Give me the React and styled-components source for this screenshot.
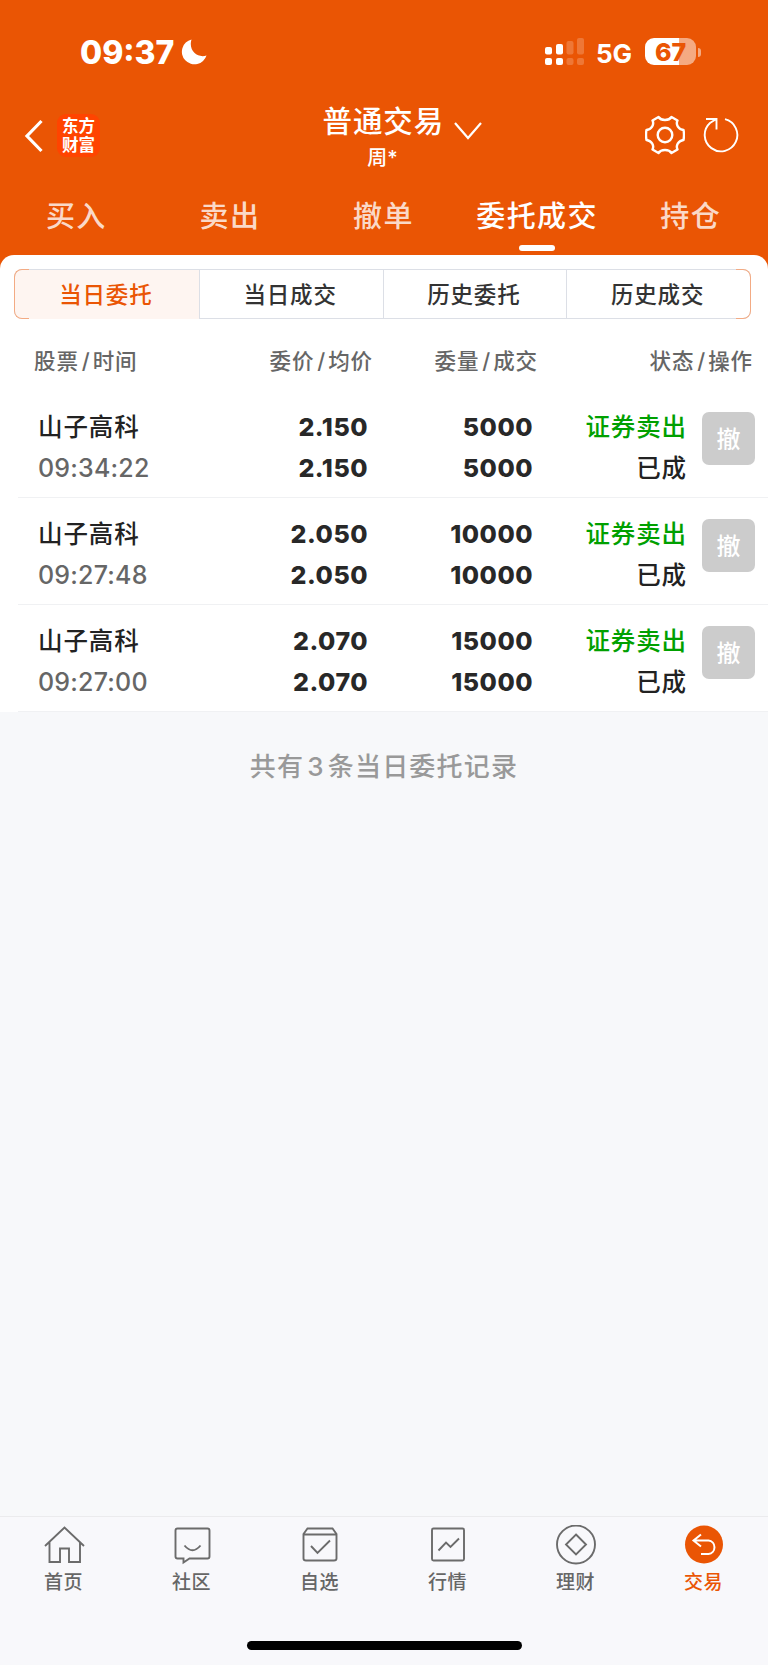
import React from 'react'
import styled, { createGlobalStyle } from 'styled-components'

const laranja = '#ea5504'
const fonte = 'Inter, "Noto Sans CJK SC", sans-serif'

const ABAS = ['买入', '卖出', '撤单', '委托成交', '持仓']
const FILTROS = ['当日委托', '当日成交', '历史委托', '历史成交']
const COLUNAS = [['股票', '时间'], ['委价', '均价'], ['委量', '成交'], ['状态', '操作']]

const ORDENS = [
    { nome: '山子高科', hora: '09:34:22', preco: '2.150', quantidade: '5000' },
    { nome: '山子高科', hora: '09:27:48', preco: '2.050', quantidade: '10000' },
    { nome: '山子高科', hora: '09:27:00', preco: '2.070', quantidade: '15000' },
]

const MENU = [
    {
        nome: '首页',
        icone: <path d="M1 21 20.500 2.500 40 21M5.500 17V37H16V23.500H25V37H36V17" />,
    },
    {
        nome: '社区',
        icone: <>
            <path d="M5.500 3.500H35.500Q37.500 3.500 37.500 5.500V31.500Q37.500 33.500 35.500 33.500H17.500L11.500 37.500V33.500H5.500Q3.500 33.500 3.500 31.500V5.500Q3.500 3.500 5.500 3.500Z" />
            <path d="M12.500 20.500Q20.500 30 28.500 20.500" />
        </>,
    },
    {
        nome: '自选',
        icone: <>
            <path d="M7.500 3.500H32.500L36.500 9V33.500Q36.500 35.500 34 35.500H6Q3.500 35.500 3.500 33.500V9ZM3.500 9.500H36.500" />
            <path d="m11 21 6.500 7L30 15.500" />
        </>,
    },
    {
        nome: '行情',
        icone: <>
            <rect x="4" y="3.500" width="32" height="32" rx="1.500" />
            <path d="m10.500 25.500 7.500-8 4.500 4.500 8.500-8.500" />
        </>,
    },
    {
        nome: '理财',
        icone: <>
            <circle cx="20" cy="19.500" r="19" />
            <path d="M20 9.500 30 19.500 20 29.500 10 19.500Z" />
        </>,
    },
    {
        nome: '交易',
        icone: <>
            <circle cx="20" cy="19.500" r="19" fill={laranja} stroke="none" />
            <path d="M17 9.500 9.500 15.500 17 21.500M9.500 15.500H24.500A6.800 6.800 0 0 1 24.500 29H17" stroke="#fff" strokeWidth="2" />
        </>,
    },
]

export default function App() {
    return (
        <>
        <GlobalStyle />
        <Tela>
            <Topo>
                <Status>
                    <Hora>09:37</Hora>
                    <Lua viewBox="0 0 26 26">
                        <path d="M10.500 .5A12.600 12.600 0 1 0 25.500 16.500C17 19.500 7 12 10.500 .5Z" fill="#fff" />
                    </Lua>
                    <Sinal viewBox="0 0 40 28" fill="#fff">
                        <rect x="0" y="9" width="7" height="7.500" rx="2" />
                        <rect x="0" y="20" width="7" height="7" rx="2" />
                        <rect x="11" y="6" width="7" height="10.500" rx="2" />
                        <rect x="11" y="20" width="7" height="7" rx="2" />
                        <g opacity="0.2">
                            <rect x="21.500" y="3" width="7" height="13.500" rx="2" />
                            <rect x="21.500" y="20" width="7" height="7" rx="2" />
                            <rect x="32" y="0" width="7" height="16.500" rx="2" />
                            <rect x="32" y="20" width="7" height="7" rx="2" />
                        </g>
                    </Sinal>
                    <Rede>5G</Rede>
                    <Bateria>67</Bateria>
                    <Polo />
                </Status>
                <Cabecalho>
                    <Lado>
                        <Voltar viewBox="0 0 20 34">
                            <path d="M17.500 2 3 17 17.500 32" fill="none" stroke="#fff" strokeWidth="3.200" />
                        </Voltar>
                        <Logo>东方财富</Logo>
                    </Lado>
                    <Centro>
                        <Titulo>
                            普通交易
                            <Seta viewBox="0 0 28 18">
                                <path d="m1 1 13 15L27 1" fill="none" stroke="#fff" strokeWidth="2.200" />
                            </Seta>
                        </Titulo>
                        <Conta>周*</Conta>
                    </Centro>
                    <Acoes>
                        <svg width="40" height="40" viewBox="-20 -20 40 40" fill="none" stroke="#fff" strokeWidth="2.400" strokeLinejoin="round">
                            <circle r="7.300" />
                            <path d="M-6.500-18C-4-14 4-14 6.500-18L12.500-14.500C10.500-10.500 13.500-5.500 18.500-5Q19.500 0 18.500 5C13.500 5.500 10.500 10.500 12.500 14.500L6.500 18C4 14-4 14-6.500 18L-12.500 14.500C-10.500 10.500-13.500 5.500-18.500 5Q-19.500 0-18.500-5C-13.500-5.500-10.500-10.500-12.500-14.500Z" />
                        </svg>
                        <svg width="36" height="38" viewBox="-18 -19 36 38" fill="none" stroke="#fff" strokeWidth="1.900">
                            <path d="M4-15.800A16.300 16.300 0 1 1-11-12L-5.500-15.500M-15-16H-4.500V-5.500" />
                        </svg>
                    </Acoes>
                </Cabecalho>
                <Abas>
                    {ABAS.map(aba => <Aba key={aba} $ativa={aba === '委托成交'}>{aba}</Aba>)}
                </Abas>
            </Topo>
            <Painel>
                <Filtros>
                    {FILTROS.map((filtro, i) => <Filtro key={filtro} $ativo={i === 0}>{filtro}</Filtro>)}
                </Filtros>
                <Colunas>
                    {COLUNAS.map(([a, b]) => <Coluna key={a}>{a}<i>/</i>{b}</Coluna>)}
                </Colunas>
                {ORDENS.map(ordem =>
                    <Ordem key={ordem.hora}>
                        <Celula>
                            <Nome>{ordem.nome}</Nome>
                            <Horario>{ordem.hora}</Horario>
                        </Celula>
                        <Celula>
                            <Numero>{ordem.preco}</Numero>
                            <Numero>{ordem.preco}</Numero>
                        </Celula>
                        <Celula>
                            <Numero>{ordem.quantidade}</Numero>
                            <Numero>{ordem.quantidade}</Numero>
                        </Celula>
                        <Celula>
                            <Nome $venda>证券卖出</Nome>
                            <Nome>已成</Nome>
                        </Celula>
                        <Cancelar>撤</Cancelar>
                    </Ordem>)}
            </Painel>
            <Resumo>共有<i>3</i>条当日委托记录</Resumo>
            <Rodape>
                <Menu>
                    {MENU.map(item =>
                        <Item key={item.nome} $ativo={item.nome === '交易'}>
                            <Icone viewBox="0 0 41 40">{item.icone}</Icone>
                            <span>{item.nome}</span>
                        </Item>)}
                </Menu>
                <Barra />
            </Rodape>
        </Tela>
        </>
    )
}

const GlobalStyle = createGlobalStyle`
* {
    box-sizing: border-box;
}
body {
    margin: 0;
    font-family: ${fonte};
}
i {
    font-style: normal;
}
svg {
    display: block;
    flex: none;
}
button {
    font-family: inherit;
    border: 0;
    padding: 0;
}
`

const Tela = styled.div`
width: 768px;
height: 1665px;
display: flex;
flex-direction: column;
background: #f7f8fa;
overflow: hidden;
`

const Topo = styled.header`
height: 269px;
flex: none;
background: ${laranja};
color: #fff;
`

const Status = styled.div`
height: 104px;
padding: 0 67px 0 80px;
display: flex;
align-items: center;
`

const Hora = styled.div`
width: 101px;
padding-top: 2px;
font-size: 32px;
font-weight: 800;
line-height: 40px;
`

const Lua = styled.svg`
width: 26px;
height: 26px;
`

const Sinal = styled.svg`
width: 40px;
height: 28px;
margin-left: auto;
margin-bottom: 1px;
`

const Rede = styled.div`
width: 50px;
margin-left: 11px;
padding-top: 2px;
font-size: 26px;
font-weight: 650;
`

const Bateria = styled.div`
width: 51px;
height: 27px;
margin-left: -1px;
margin-bottom: 1px;
border-radius: 9px;
background: linear-gradient(90deg, #fff 34px, rgba(255, 255, 255, 0.5) 34px);
color: ${laranja};
font-size: 25px;
font-weight: 800;
line-height: 28px;
text-align: center;
`

const Polo = styled.div`
width: 3px;
height: 9px;
margin-left: 2px;
border-radius: 0 4px 4px 0;
background: rgba(255, 255, 255, 0.5);
`

const Cabecalho = styled.div`
height: 80px;
padding: 0 29px 0 24px;
display: grid;
grid-template-columns: 1fr auto 1fr;
`

const Lado = styled.div`
height: 63px;
display: flex;
align-items: center;
`

const Voltar = styled.svg`
width: 20px;
height: 34px;
`

const Logo = styled.div`
width: 43px;
height: 43px;
margin-left: 13px;
padding: 2px 5px 0;
border-radius: 9px;
background: #ff4400;
font-family: "Noto Sans CJK SC", sans-serif;
font-size: 16.500px;
font-weight: 700;
line-height: 19px;
word-break: break-all;
`

const Centro = styled.div`
width: 120px;
padding-top: 1px;
margin-left: 1px;
margin-right: -1px;
display: flex;
flex-direction: column;
align-items: center;
`

const Titulo = styled.div`
width: 120px;
height: 33px;
display: flex;
align-items: center;
font-size: 29.500px;
font-weight: 500;
line-height: 33px;
letter-spacing: 0.900px;
white-space: nowrap;
`

const Seta = styled.svg`
width: 28px;
height: 18px;
margin: 19px 0 0 10px;
`

const Conta = styled.div`
margin-top: 7px;
font-size: 20px;
font-weight: 500;
line-height: 26px;
`

const Acoes = styled.div`
height: 62px;
display: flex;
align-items: center;
justify-content: flex-end;
gap: 18px;
`

const Abas = styled.nav`
height: 71px;
display: grid;
grid-template-columns: repeat(5, 1fr);
`

const Aba = styled.div`
display: flex;
flex-direction: column;
align-items: center;
padding: 14px 1px 0 0;
font-size: 29px;
font-weight: 500;
line-height: 38px;
letter-spacing: 1.400px;
color: ${props => props.$ativa ? '#fff' : 'rgba(255, 255, 255, 0.8)'};

&::after {
    content: '';
    width: 36px;
    height: 6px;
    margin-top: 9px;
    border-radius: 3px;
    background: ${props => props.$ativa ? '#fff' : 'transparent'};
}
`

const Painel = styled.main`
height: 457px;
flex: none;
margin-top: -14px;
padding-top: 14px;
border-radius: 14px 14px 0 0;
background: #fff;
`

const Filtros = styled.div`
position: relative;
height: 50px;
margin: 0 17px 0 14px;
display: grid;
grid-template-columns: repeat(4, 1fr);
border: 1px solid #dcdfe6;
border-radius: 8px;

/* cantos alaranjados por cima da borda */
&::before,
&::after {
    content: '';
    position: absolute;
    top: -1px;
    bottom: -1px;
    width: 14px;
    border: 1px solid #f3ab84;
}

&::before {
    left: -1px;
    border-right: none;
    border-radius: 8px 0 0 8px;
}

&::after {
    right: -1px;
    border-left: none;
    border-radius: 0 8px 8px 0;
}
`

const Filtro = styled.div`
padding-right: 2px;
border-left: ${props => props.$ativo ? 'none' : '1px solid #dcdfe6'};
border-radius: ${props => props.$ativo ? '7px 0 0 7px' : '0'};
background: ${props => props.$ativo ? '#fef5f1' : 'transparent'};
color: ${props => props.$ativo ? laranja : '#333'};
font-size: 22.500px;
font-weight: 500;
line-height: 49px;
letter-spacing: 0.800px;
text-align: center;
`

const Colunas = styled.div`
height: 72px;
padding: 0 15px 0 34px;
display: grid;
grid-template-columns: 139px 200px 165px 1fr;
`

const Coluna = styled.div`
color: #666;
font-size: 21.500px;
font-weight: 500;
line-height: 84px;
letter-spacing: 0.900px;
text-align: right;
white-space: nowrap;

&:first-child {
    text-align: left;
}

i {
    margin: 0 2px 0 3px;
}
`

const Ordem = styled.div`
height: 107px;
margin-left: 18px;
padding: 16px 13px 0 20px;
display: grid;
grid-template-columns: 130px 200px 165px 154px 1fr;
border-bottom: 1px solid #f0f1f3;
`

const Celula = styled.div`
display: flex;
flex-direction: column;
align-items: flex-end;
white-space: nowrap;

&:first-child {
    align-items: flex-start;
}
`

const Nome = styled.div`
color: ${props => props.$venda ? '#00a000' : '#222'};
font-size: 24.500px;
font-weight: 500;
line-height: 41px;
letter-spacing: 0.900px;
`

const Horario = styled.div`
color: #666;
font-size: 25px;
font-weight: 500;
line-height: 41px;
letter-spacing: 0.200px;
`

const Numero = styled.div`
color: #282828;
font-size: 25px;
font-weight: 800;
line-height: 41px;
letter-spacing: 0.500px;
`

const Cancelar = styled.button`
width: 53px;
height: 53px;
margin-top: 5px;
padding-bottom: 2px;
justify-self: end;
border-radius: 7px;
background: #ccc;
color: #fff;
font-size: 24px;
font-weight: 500;
`

const Resumo = styled.div`
margin-top: 35px;
color: #999;
font-size: 26px;
font-weight: 500;
line-height: 40px;
letter-spacing: 1.200px;
text-align: center;

i {
    margin: 0 3px;
}
`

const Rodape = styled.footer`
height: 149px;
margin-top: auto;
border-top: 1px solid #ebebed;
background: #f8f8fb;
`

const Menu = styled.nav`
height: 124px;
display: grid;
grid-template-columns: repeat(6, 1fr);
`

const Item = styled.div`
padding-top: 8px;
display: flex;
flex-direction: column;
align-items: center;
color: ${props => props.$ativo ? laranja : '#666'};
font-size: 19px;
font-weight: 500;
line-height: 28px;
letter-spacing: 0.500px;

span {
    margin: 4px 1px 0 0;
}
`

const Icone = styled.svg`
width: 41px;
height: 40px;
fill: none;
stroke: #6b6b6b;
stroke-width: 1.900;
`

const Barra = styled.div`
width: 275px;
height: 9px;
margin: 0 auto;
border-radius: 5px;
background: #000;
`
